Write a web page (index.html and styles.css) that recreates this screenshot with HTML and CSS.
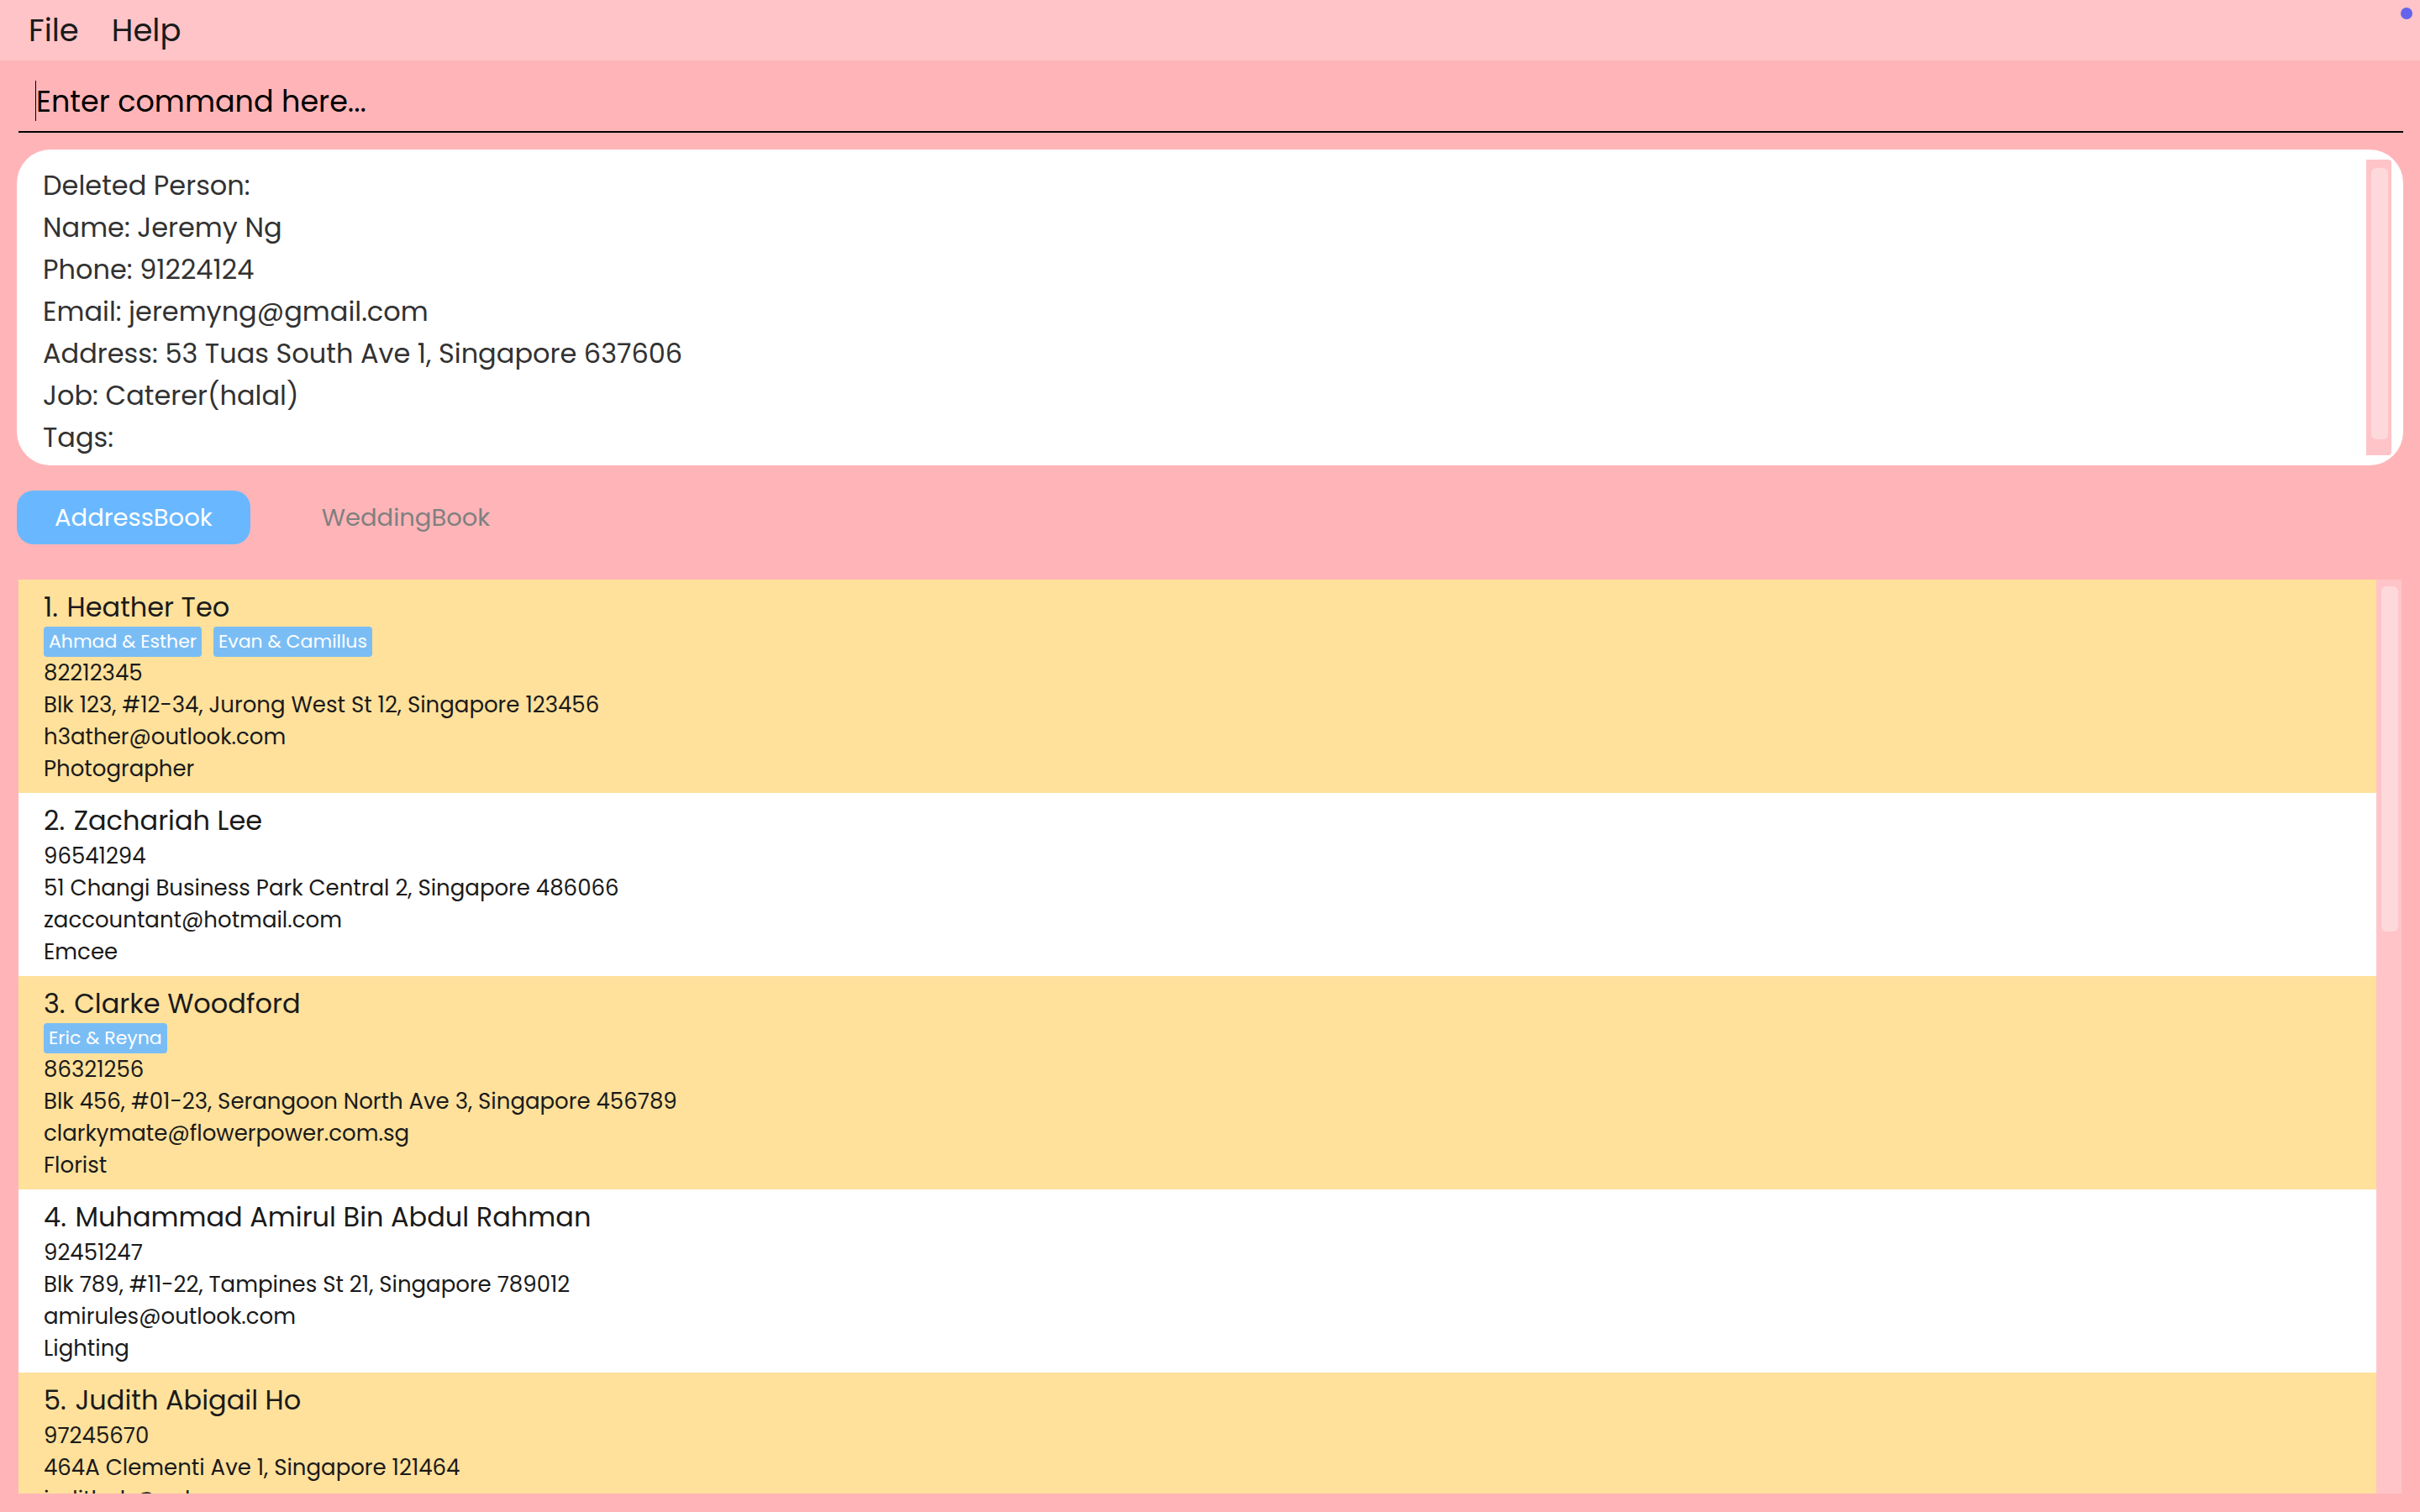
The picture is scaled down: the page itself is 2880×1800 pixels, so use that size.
FILE: index.html
```html
<!DOCTYPE html>
<html lang="en">
<head>
<meta charset="utf-8">
<title>AddressBook</title>
<link rel="stylesheet" href="styles.css">
</head>
<body>
<div class="app">
  <nav class="menu-bar">
    <button class="menu" type="button">File</button>
    <button class="menu" type="button">Help</button>
    <span class="status-dot"></span>
  </nav>
  <form class="command">
    <input class="command-input" type="text" aria-label="Command" placeholder="Enter command here...">
  </form>
  <section class="result">
    <div class="result-text">
      <p>Deleted Person:</p>
      <p>Name: Jeremy Ng</p>
      <p>Phone: 91224124</p>
      <p>Email: jeremyng@gmail.com</p>
      <p>Address: 53 Tuas South Ave 1, Singapore 637606</p>
      <p>Job: Caterer(halal)</p>
      <p>Tags:</p>
    </div>
    <div class="track result-track"><div class="thumb"></div></div>
  </section>
  <div class="tabs" role="tablist">
    <button class="tab tab-active" type="button" role="tab" aria-selected="true">AddressBook</button>
    <button class="tab" type="button" role="tab" aria-selected="false">WeddingBook</button>
  </div>
  <main class="book">
    <ul class="people">
      <li class="person">
        <h2><span class="index">1. </span>Heather Teo</h2>
        <div class="tags"><span class="tag">Ahmad &amp; Esther</span><span class="tag">Evan &amp; Camillus</span></div>
        <p>82212345</p>
        <p>Blk 123, #12-34, Jurong West St 12, Singapore 123456</p>
        <p>h3ather@outlook.com</p>
        <p>Photographer</p>
      </li>
      <li class="person">
        <h2><span class="index">2. </span>Zachariah Lee</h2>
        <p>96541294</p>
        <p>51 Changi Business Park Central 2, Singapore 486066</p>
        <p>zaccountant@hotmail.com</p>
        <p>Emcee</p>
      </li>
      <li class="person">
        <h2><span class="index">3. </span>Clarke Woodford</h2>
        <div class="tags"><span class="tag">Eric &amp; Reyna</span></div>
        <p>86321256</p>
        <p>Blk 456, #01-23, Serangoon North Ave 3, Singapore 456789</p>
        <p>clarkymate@flowerpower.com.sg</p>
        <p>Florist</p>
      </li>
      <li class="person">
        <h2><span class="index">4. </span>Muhammad Amirul Bin Abdul Rahman</h2>
        <p>92451247</p>
        <p>Blk 789, #11-22, Tampines St 21, Singapore 789012</p>
        <p>amirules@outlook.com</p>
        <p>Lighting</p>
      </li>
      <li class="person">
        <h2><span class="index">5. </span>Judith Abigail Ho</h2>
        <p>97245670</p>
        <p>464A Clementi Ave 1, Singapore 121464</p>
        <p>judithah@aol.com</p>
      </li>
    </ul>
    <div class="track book-track"><div class="thumb"></div></div>
  </main>
</div>
</body>
</html>
```
FILE: styles.css
```css
* {
  box-sizing: border-box;
}

body,
p,
h2,
ul {
  margin: 0;
  padding: 0;
}

body {
  background: #ffb5b8;
  color: #1a1a1a;
  font-family: Poppins, Inter, "Open Sans", sans-serif;
  font-size: 26px;
}

button,
input {
  border: 0;
  padding: 0;
  background: none;
  font: inherit;
  color: inherit;
}

.app {
  display: flex;
  flex-direction: column;
  height: 100vh;
  padding-bottom: 22px;
}

/* Menu bar */
.menu-bar {
  position: relative;
  flex: none;
  display: flex;
  gap: 39px;
  height: 72px;
  padding: 0 34px;
  background: #ffc4c8;
}

.menu {
  font-size: 37px;
}

.status-dot {
  position: absolute;
  top: 9px;
  right: 9px;
  width: 14px;
  height: 14px;
  border-radius: 50%;
  background: #6464eb;
}

/* Command box */
.command {
  flex: none;
  margin: 0 20px 0 22px;
  padding: 24px 20px 12px;
  border-bottom: 2px solid #000;
}

.command-input {
  display: block;
  width: 100%;
  height: 48px;
  border-left: 1px solid #000;
  font-size: 35px;
  outline: none;
}

.command-input::placeholder {
  color: #000;
  opacity: 1;
}

/* Result panel */
.result {
  flex: none;
  display: flex;
  justify-content: space-between;
  margin: 20px 20px 0;
  padding: 12px 14px 12px 31px;
  border-radius: 40px;
  background: #fff;
}

.result-text {
  padding-top: 6px;
  height: 352px;
  color: #323232;
  font-size: 32px;
  line-height: 50px;
}

/* Scroll bars */
.track {
  flex: none;
  width: 30px;
  padding: 8px 4px 8px 6px;
  background: #ffc4c8;
}

.thumb {
  border-radius: 6px;
  background: #fdd9dc;
}

.result-track {
  padding-top: 10px;
  border-radius: 0 4px 4px 0;
}

.result-track .thumb {
  height: 323px;
}

.book-track .thumb {
  height: 411px;
}

/* Tabs */
.tabs {
  flex: none;
  display: flex;
  gap: 40px;
  padding: 30px 20px 42px;
}

.tab {
  height: 64px;
  padding: 0 45px;
  border-radius: 20px;
  color: #808080;
  font-size: 29px;
}

.tab-active {
  background: #69b8ff;
  color: #fff;
}

/* Person list */
.book {
  flex: 1;
  min-height: 0;
  display: flex;
  margin: 0 22px;
}

.people {
  flex: 1;
  overflow: hidden;
  list-style: none;
}

.person {
  padding: 10px 30px;
  background: #fff;
  line-height: 38px;
}

.person:nth-child(odd) {
  background: #ffe19b;
}

.person h2 {
  font-size: 32px;
  font-weight: 400;
  line-height: 46px;
}

.index {
  margin-right: 2px;
}

.tags {
  display: flex;
  gap: 14px;
}

.tag {
  padding: 0 6px;
  border-radius: 4px;
  background: #7abdf5;
  color: #fff;
  font-size: 22px;
  line-height: 36px;
}
```
